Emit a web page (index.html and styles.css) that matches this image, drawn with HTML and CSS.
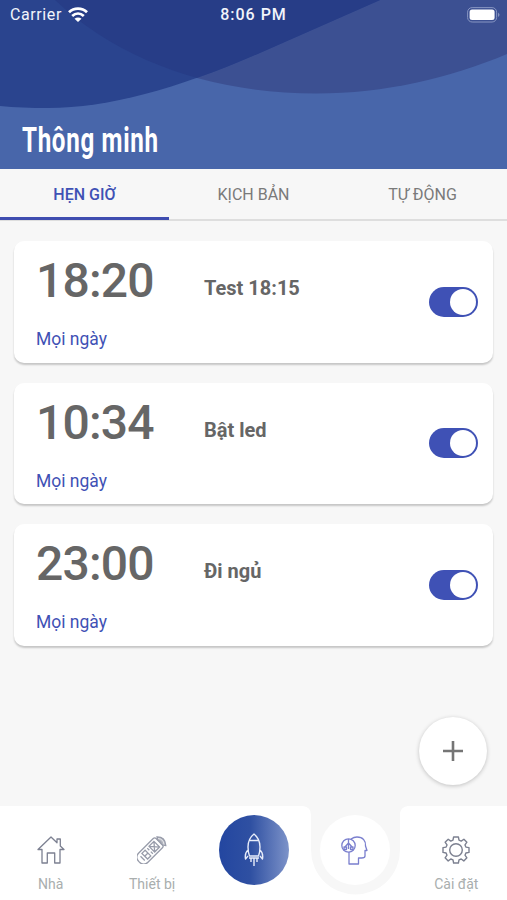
FILE: index.html
```html
<!DOCTYPE html>
<html lang="vi">
<head>
    <meta charset="UTF-8">
    <meta name="viewport" content="width=device-width, initial-scale=1.0">
    <title>Thông minh</title>
    <link rel="stylesheet" href="styles.css">
</head>
<body>

    <div class="app">
        <!-- Header with status bar and page title -->
        <header class="header">
            <svg class="waves" viewBox="0 0 507 169">
                <defs>
                    <clipPath id="left-wave"><path d="M0 0H380L262 52C180 88 110 108 48 108Q22 108 0 106Z"/></clipPath>
                </defs>
                <path fill="#3c5092" d="M55 0C120 62 215 93.5 316 93.5C385 93.5 450 78 507 54V0Z"/>
                <path fill="#2a448e" d="M0 0H380L262 52C180 88 110 108 48 108Q22 108 0 106Z"/>
                <path fill="#273d87" clip-path="url(#left-wave)" d="M55 0C120 62 215 93.5 316 93.5C385 93.5 450 78 507 54V0Z"/>
            </svg>
            <div class="status">
                <div class="carrier">
                    <span>Carrier</span>
                    <svg width="20" height="15" viewBox="0 0 20 15" fill="none" stroke="#fff" stroke-width="2.8">
                        <path d="M1 5.2C6 .4 14 .4 19 5.2"/>
                        <path d="M4.2 9C7.700 5.800 12.300 5.800 15.800 9"/>
                        <path fill="#fff" stroke="none" d="M10 15L6.500 11.700C8.500 10 11.500 10 13.500 11.700Z"/>
                    </svg>
                </div>
                <span class="clock">8:06 PM</span>
                <div class="battery">
                    <svg width="33" height="16" viewBox="0 0 33 16">
                        <rect x=".6" y=".6" width="29" height="14.4" rx="4.5" fill="none" stroke="#8795c2"/>
                        <rect x="2.6" y="2.6" width="25" height="10.4" rx="2.5" fill="#fff"/>
                        <path d="M31 5.5q3 2.3 0 4.6z" fill="#8592bd"/>
                    </svg>
                </div>
            </div>
            <h1 class="title">Thông minh</h1>
        </header>

        <!-- Tabs -->
        <div class="tabs">
            <div class="tab active">HẸN GIỜ</div>
            <div class="tab">KỊCH BẢN</div>
            <div class="tab">TỰ ĐỘNG</div>
        </div>

        <!-- Timer list -->
        <main class="list">
            <div class="card">
                <div class="when">
                    <div class="time">18:20</div>
                    <div class="repeat">Mọi ngày</div>
                </div>
                <div class="name">Test 18:15</div>
                <div class="switch"></div>
            </div>
            <div class="card">
                <div class="when">
                    <div class="time">10:34</div>
                    <div class="repeat">Mọi ngày</div>
                </div>
                <div class="name">Bật led</div>
                <div class="switch"></div>
            </div>
            <div class="card">
                <div class="when">
                    <div class="time">23:00</div>
                    <div class="repeat">Mọi ngày</div>
                </div>
                <div class="name">Đi ngủ</div>
                <div class="switch"></div>
            </div>
        </main>

        <button class="add">
            <svg width="20" height="20" viewBox="0 0 20 20" stroke="#757575" stroke-width="2.6"><path d="M10 0V20M0 10H20"/></svg>
        </button>

        <!-- Bottom navigation -->
        <nav class="nav">
            <svg class="nav-bg" viewBox="0 0 507 94">
                <path fill="#fff" d="M0 0H303Q311 1 311 9V44A44.5 44.5 0 0 0 400 44V7Q401 1 408 0H507V94H0Z"/>
            </svg>
            <div class="item">
                <svg width="28" height="28" viewBox="0 0 28 28" fill="none" stroke="#7c8091" stroke-width="1.3" stroke-linejoin="round">
                    <path d="M14 1L1 13.5H5V27H10.3V17H17.7V27H23V13.5H27L23.3 10V3H20V6.8Z"/>
                </svg>
                <span>Nhà</span>
            </div>
            <div class="item">
                <svg width="30" height="28" viewBox="0 0 30 28" fill="none" stroke="#989caa" stroke-width="1.3">
                    <g transform="rotate(45 12 16)">
                        <path d="M5.500 3.500Q5.500 1.500 7.500 1.500H16.500Q18.500 1.500 18.500 3.500V24Q18.500 30 12 30T5.500 24Z"/>
                        <path d="M8 5H16V12H8ZM8 5L16 12M16 5L8 12M8 14.500H11M13 14.500H16M8 17.500H16V22H8ZM12 17.500V22M9 25H15"/>
                    </g>
                    <path fill="#b4b7c0" d="M20 .8C25.500 .8 28.500 4 28.800 9.500Q25.500 9.500 24.500 8Q23.500 5 21 4Z"/>
                    <path stroke="#fff" stroke-width=".7" d="M21 2.500Q26.500 3 27 8.500"/>
                </svg>
                <span>Thiết bị</span>
            </div>
            <div class="item">
                <div class="launch">
                    <svg width="20" height="34" viewBox="0 0 20 34" fill="none" stroke="#e8edfa" stroke-width="1.4" stroke-linejoin="round">
                        <path d="M10 1C5.5 4.5 4 9 4 14Q4 19 5.5 23H14.5Q16 19 16 14C16 9 14.5 4.5 10 1ZM6 7.5H14M4.2 17C1.5 19 .7 21 1.5 26L4 23M15.8 17C18.500 19 19.300 21 18.500 26L16 23M5 25H15"/>
                        <path d="M7 25V29M10 25V33M13 25V29"/>
                    </svg>
                </div>
            </div>
            <div class="item">
                <div class="smart">
                    <svg width="27" height="29" viewBox="0 0 27 29" fill="none" stroke="#7a7fce" stroke-width="1.3" stroke-linejoin="round">
                        <circle cx="7.500" cy="9.500" r="6.700"/>
                        <path d="M10 3Q13 1 16 1C22 1 25 5 24.500 10L26 14.500H24V20Q24 22 20.500 22H17.500V28H8V16"/>
                        <path d="M7.500 3V13M7.500 7L3.500 11.500M7.500 7L11.500 11.500M3 11H5.500V13.500H3ZM9.500 11H12V13.500H9.500Z"/>
                    </svg>
                </div>
            </div>
            <div class="item">
                <svg width="28" height="28" viewBox="0 0 28 28" fill="none" stroke="#7c8090" stroke-width="1.4" stroke-linejoin="round">
                    <path d="M11.600 1H16.400L17 4.200L19.200 5.100L21.900 3.200L24.900 6.200L23 8.900L23.900 11.100L27 11.600V16.400L23.900 17L23 19.200L24.900 21.800L21.800 24.900L19.200 23L17 23.900L16.400 27H11.600L11 23.900L8.800 23L6.200 24.900L3.100 21.800L5 19.200L4.100 17L1 16.400V11.600L4.100 11.100L5 8.900L3.100 6.200L6.200 3.200L8.800 5.100L11 4.200Z"/>
                    <circle cx="14" cy="14" r="6.300"/>
                </svg>
                <span>Cài đặt</span>
            </div>
        </nav>
    </div>

</body>
</html>
```
FILE: styles.css
```css
* {
    box-sizing: border-box;
}
body {
    margin: 0;
    font-family: Roboto, "Noto Sans", sans-serif;
    background-color: #f7f7f7;
}
.app {
    display: flex;
    flex-direction: column;
    position: relative;
    height: 900px;
    overflow: hidden;
}
.header {
    position: relative;
    height: 169px;
    background-color: #4866aa;
}
.waves {
    position: absolute;
    left: 0;
    top: 0;
    width: 507px;
    height: 169px;
}
.status {
    position: relative;
    display: grid;
    grid-template-columns: 1fr auto 1fr;
    align-items: center;
    height: 29px;
    padding: 0 7px 0 10px;
    color: #f1f4fb;
    font-size: 16px;
    letter-spacing: 0.6px;
}
.carrier {
    display: flex;
    align-items: center;
    gap: 6px;
}
.clock {
    margin-right: 3px;
    font-weight: 500;
    letter-spacing: 1px;
}
.battery {
    display: flex;
    justify-content: flex-end;
}
.title {
    position: relative;
    width: max-content;
    margin: 91px 0 0 22px;
    color: white;
    font-size: 35px;
    line-height: 42px;
    font-weight: 700;
    letter-spacing: 1px;
    transform: scaleX(0.69);
    transform-origin: left;
}
.tabs {
    display: flex;
    height: 52px;
    border-bottom: 2px solid #dedede;
}
.tab {
    flex: 1;
    height: 51px;
    color: #7a7a7a;
    font-size: 16px;
    line-height: 51px;
    text-align: center;
}
.tab.active {
    color: #3f51b5;
    font-weight: 500;
    border-bottom: 3px solid #3f4db0;
}
.list {
    display: flex;
    flex-direction: column;
    gap: 20px;
    padding: 20px 14px;
}
.card {
    display: flex;
    height: 121.5px;
    padding: 0 15px 0 22px;
    background-color: white;
    border-radius: 10px;
    box-shadow: 0 2px 2px rgba(0, 0, 0, 0.2);
}
.when {
    width: 168px;
}
.time {
    height: 87px;
    color: #666;
    font-size: 48px;
    line-height: 80px;
    font-weight: 500;
    letter-spacing: -0.8px;
}
.repeat {
    color: #3f51b5;
    font-size: 17.5px;
    line-height: 23px;
}
.name {
    flex: 1;
    color: #666;
    font-size: 20px;
    line-height: 24px;
    font-weight: 700;
    padding-top: 35px;
}
.switch {
    align-self: center;
    width: 49px;
    height: 30px;
    padding: 2px;
    border-radius: 15px;
    background-color: #3f51b5;
}
.switch::after {
    content: "";
    display: block;
    width: 26px;
    height: 26px;
    margin-left: auto;
    border-radius: 50%;
    background-color: white;
}
.add {
    position: absolute;
    left: 419px;
    top: 717px;
    display: flex;
    align-items: center;
    justify-content: center;
    width: 68px;
    height: 68px;
    padding: 0;
    border: none;
    border-radius: 50%;
    background-color: white;
    box-shadow: 0 1px 4px rgba(0, 0, 0, 0.22);
}
.nav {
    position: relative;
    display: flex;
    height: 94px;
    margin-top: auto;
}
.nav-bg {
    position: absolute;
    left: 0;
    top: 0;
    width: 507px;
    height: 94px;
}
.item {
    position: relative;
    flex: 1;
    display: flex;
    flex-direction: column;
    align-items: center;
    padding-top: 30px;
    color: #a9aeae;
    font-size: 14px;
    line-height: 20px;
}
.item span {
    margin-top: 10px;
}
.launch, .smart {
    display: flex;
    align-items: center;
    justify-content: center;
    width: 70px;
    height: 70px;
    margin-top: -21px;
    border-radius: 50%;
}
.launch {
    background: linear-gradient(90deg, #2346a0, #2f50a2 45%, #7d93c9);
}
.smart {
    background-color: white;
}
```
